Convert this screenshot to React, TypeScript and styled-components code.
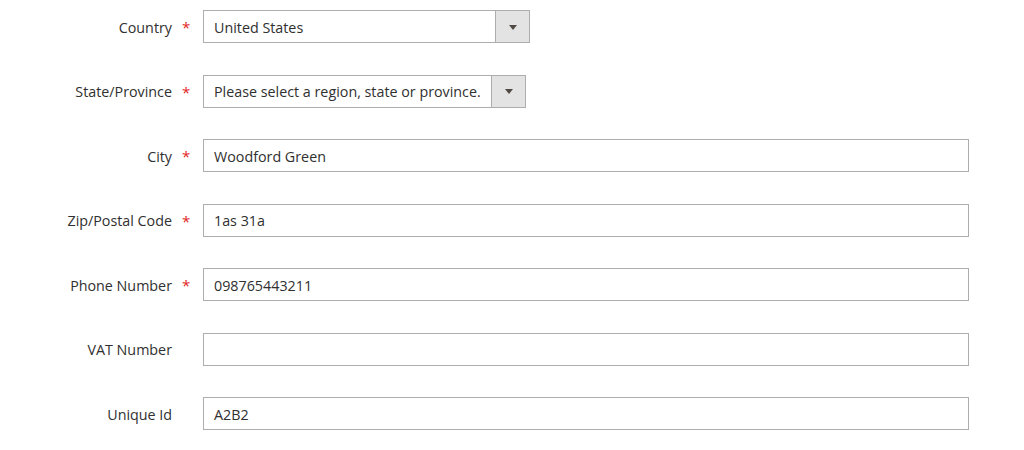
import React from "react";
import styled, { createGlobalStyle } from "styled-components";

const GlobalStyle = createGlobalStyle`
  html, body {
    margin: 0;
    padding: 0;
    background: #ffffff;
  }
  body {
    font-family: "Open Sans", "Noto Sans", sans-serif;
    font-size: 14.3px;
    color: #303030;
  }
`;

const Form = styled.form`
  display: flex;
  flex-direction: column;
  gap: 31.5px;
  padding-top: 10px;
  width: 969px;
`;

const Row = styled.div`
  display: grid;
  grid-template-columns: 172px 31px 766px;
  align-items: center;
  height: 33px;
`;

const Label = styled.label`
  text-align: right;
  font-size: 14.3px;
  color: #303030;
  white-space: nowrap;
  padding-top: 1px;
`;

const Required = styled.span`
  color: #e22626;
  font-size: 15px;
  padding-left: 10px;
  line-height: 1;
  position: relative;
  top: 1px;
`;

const Control = styled.div`
  display: flex;
  align-items: stretch;
  height: 33px;
`;

const TextBox = styled.div`
  box-sizing: border-box;
  flex: 1;
  height: 33px;
  display: flex;
  align-items: center;
  padding: 1px 10px 0;
  border: 1px solid #adadad;
  background: #ffffff;
  font-size: 14.3px;
  color: #303030;
`;

const Select = styled.div<{ width: number }>`
  box-sizing: border-box;
  width: ${({ width }) => width}px;
  height: 33px;
  display: flex;
  border: 1px solid #adadad;
  background: #ffffff;
`;

const SelectValue = styled.div`
  flex: 1;
  display: flex;
  align-items: center;
  padding: 1px 10px 0;
  font-size: 14.3px;
  color: #303030;
  white-space: nowrap;
`;

const SelectButton = styled.div`
  width: 33px;
  border-left: 1px solid #adadad;
  background: #e3e3e3;
  display: flex;
  align-items: center;
  justify-content: center;
`;

const Arrow = styled.span`
  width: 0;
  height: 0;
  border-left: 4px solid transparent;
  border-right: 4px solid transparent;
  border-top: 5px solid #514943;
  margin-top: 1px;
`;

type Field = {
  label: string;
  required: boolean;
  value: string;
  select?: number;
};

const fields: Field[] = [
  { label: "Country", required: true, value: "United States", select: 327 },
  {
    label: "State/Province",
    required: true,
    value: "Please select a region, state or province.",
    select: 323,
  },
  { label: "City", required: true, value: "Woodford Green" },
  { label: "Zip/Postal Code", required: true, value: "1as 31a" },
  { label: "Phone Number", required: true, value: "098765443211" },
  { label: "VAT Number", required: false, value: "" },
  { label: "Unique Id", required: false, value: "A2B2" },
];

const App: React.FC = () => {
  return (
    <>
      <GlobalStyle />
      <Form>
        {fields.map((f) => (
          <Row key={f.label}>
            <Label>{f.label}</Label>
            <span>{f.required && <Required>*</Required>}</span>
            <Control>
              {f.select ? (
                <Select width={f.select}>
                  <SelectValue>{f.value}</SelectValue>
                  <SelectButton>
                    <Arrow />
                  </SelectButton>
                </Select>
              ) : (
                <TextBox>{f.value}</TextBox>
              )}
            </Control>
          </Row>
        ))}
      </Form>
    </>
  );
};

export default App;
